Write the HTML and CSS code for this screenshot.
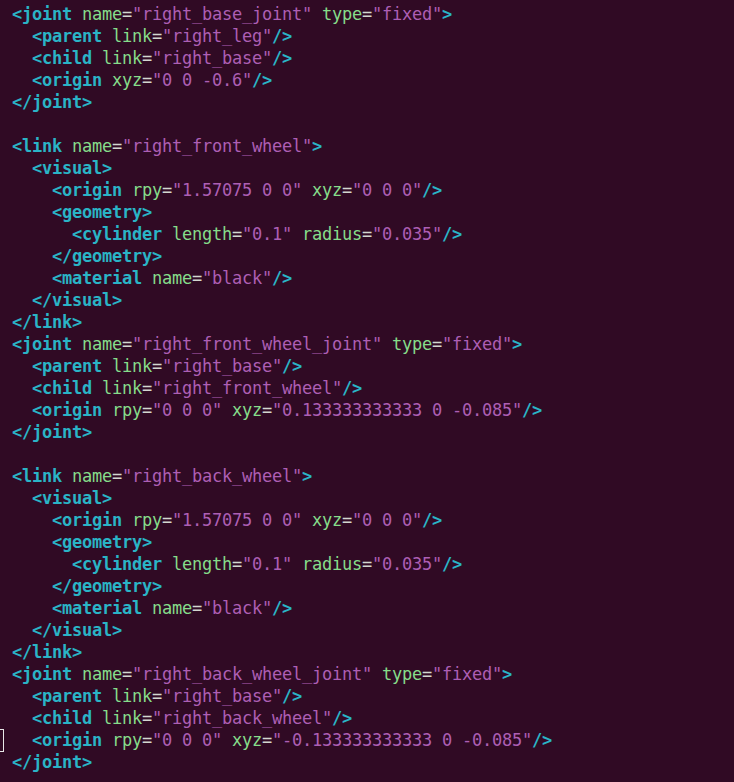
FILE: index.html
```html
<!DOCTYPE html>
<html>
<head>
<meta charset="utf-8">
<link rel="stylesheet" href="styles.css">
</head>
<body>
<div class="term">
<div class="ln"><span class="t">&lt;joint</span> <span class="a">name</span><span class="e">=</span><span class="s">"right_base_joint"</span> <span class="a">type</span><span class="e">=</span><span class="s">"fixed"</span><span class="t">&gt;</span></div>
<div class="ln">  <span class="t">&lt;parent</span> <span class="a">link</span><span class="e">=</span><span class="s">"right_leg"</span><span class="t">/&gt;</span></div>
<div class="ln">  <span class="t">&lt;child</span> <span class="a">link</span><span class="e">=</span><span class="s">"right_base"</span><span class="t">/&gt;</span></div>
<div class="ln">  <span class="t">&lt;origin</span> <span class="a">xyz</span><span class="e">=</span><span class="s">"0 0 -0.6"</span><span class="t">/&gt;</span></div>
<div class="ln"><span class="t">&lt;/joint&gt;</span></div>
<div class="ln"> </div>
<div class="ln"><span class="t">&lt;link</span> <span class="a">name</span><span class="e">=</span><span class="s">"right_front_wheel"</span><span class="t">&gt;</span></div>
<div class="ln">  <span class="t">&lt;visual&gt;</span></div>
<div class="ln">    <span class="t">&lt;origin</span> <span class="a">rpy</span><span class="e">=</span><span class="s">"1.57075 0 0"</span> <span class="a">xyz</span><span class="e">=</span><span class="s">"0 0 0"</span><span class="t">/&gt;</span></div>
<div class="ln">    <span class="t">&lt;geometry&gt;</span></div>
<div class="ln">      <span class="t">&lt;cylinder</span> <span class="a">length</span><span class="e">=</span><span class="s">"0.1"</span> <span class="a">radius</span><span class="e">=</span><span class="s">"0.035"</span><span class="t">/&gt;</span></div>
<div class="ln">    <span class="t">&lt;/geometry&gt;</span></div>
<div class="ln">    <span class="t">&lt;material</span> <span class="a">name</span><span class="e">=</span><span class="s">"black"</span><span class="t">/&gt;</span></div>
<div class="ln">  <span class="t">&lt;/visual&gt;</span></div>
<div class="ln"><span class="t">&lt;/link&gt;</span></div>
<div class="ln"><span class="t">&lt;joint</span> <span class="a">name</span><span class="e">=</span><span class="s">"right_front_wheel_joint"</span> <span class="a">type</span><span class="e">=</span><span class="s">"fixed"</span><span class="t">&gt;</span></div>
<div class="ln">  <span class="t">&lt;parent</span> <span class="a">link</span><span class="e">=</span><span class="s">"right_base"</span><span class="t">/&gt;</span></div>
<div class="ln">  <span class="t">&lt;child</span> <span class="a">link</span><span class="e">=</span><span class="s">"right_front_wheel"</span><span class="t">/&gt;</span></div>
<div class="ln">  <span class="t">&lt;origin</span> <span class="a">rpy</span><span class="e">=</span><span class="s">"0 0 0"</span> <span class="a">xyz</span><span class="e">=</span><span class="s">"0.133333333333 0 -0.085"</span><span class="t">/&gt;</span></div>
<div class="ln"><span class="t">&lt;/joint&gt;</span></div>
<div class="ln"> </div>
<div class="ln"><span class="t">&lt;link</span> <span class="a">name</span><span class="e">=</span><span class="s">"right_back_wheel"</span><span class="t">&gt;</span></div>
<div class="ln">  <span class="t">&lt;visual&gt;</span></div>
<div class="ln">    <span class="t">&lt;origin</span> <span class="a">rpy</span><span class="e">=</span><span class="s">"1.57075 0 0"</span> <span class="a">xyz</span><span class="e">=</span><span class="s">"0 0 0"</span><span class="t">/&gt;</span></div>
<div class="ln">    <span class="t">&lt;geometry&gt;</span></div>
<div class="ln">      <span class="t">&lt;cylinder</span> <span class="a">length</span><span class="e">=</span><span class="s">"0.1"</span> <span class="a">radius</span><span class="e">=</span><span class="s">"0.035"</span><span class="t">/&gt;</span></div>
<div class="ln">    <span class="t">&lt;/geometry&gt;</span></div>
<div class="ln">    <span class="t">&lt;material</span> <span class="a">name</span><span class="e">=</span><span class="s">"black"</span><span class="t">/&gt;</span></div>
<div class="ln">  <span class="t">&lt;/visual&gt;</span></div>
<div class="ln"><span class="t">&lt;/link&gt;</span></div>
<div class="ln"><span class="t">&lt;joint</span> <span class="a">name</span><span class="e">=</span><span class="s">"right_back_wheel_joint"</span> <span class="a">type</span><span class="e">=</span><span class="s">"fixed"</span><span class="t">&gt;</span></div>
<div class="ln">  <span class="t">&lt;parent</span> <span class="a">link</span><span class="e">=</span><span class="s">"right_base"</span><span class="t">/&gt;</span></div>
<div class="ln">  <span class="t">&lt;child</span> <span class="a">link</span><span class="e">=</span><span class="s">"right_back_wheel"</span><span class="t">/&gt;</span></div>
<div class="ln cur-line"><span class="cursor"></span>  <span class="t">&lt;origin</span> <span class="a">rpy</span><span class="e">=</span><span class="s">"0 0 0"</span> <span class="a">xyz</span><span class="e">=</span><span class="s">"-0.133333333333 0 -0.085"</span><span class="t">/&gt;</span></div>
<div class="ln"><span class="t">&lt;/joint&gt;</span></div>
</div>
</body>
</html>
```

FILE: styles.css
```css
html, body {
  margin: 0;
  padding: 0;
  background: #300a24;
  height: 100%;
  overflow: hidden;
}
.term {
  padding: 3px 0 0 12px;
  font-family: "DejaVu Sans Mono", "Liberation Mono", monospace;
  font-size: 17px;
  letter-spacing: -0.235px;
  color: #d3d7cf;
}
.ln {
  height: 22px;
  line-height: 22px;
  white-space: pre;
}
.cur-line {
  position: relative;
}
.cursor {
  position: absolute;
  left: -26px;
  top: 0;
  width: 18px;
  height: 23px;
  border: 1px solid #e8e8e8;
  box-sizing: border-box;
}
.t {
  color: #2ab4c6;
  font-weight: bold;
}
.a {
  color: #86dc8a;
}
.e {
  color: #d3d7cf;
}
.s {
  color: #ad5fb4;
}
```
